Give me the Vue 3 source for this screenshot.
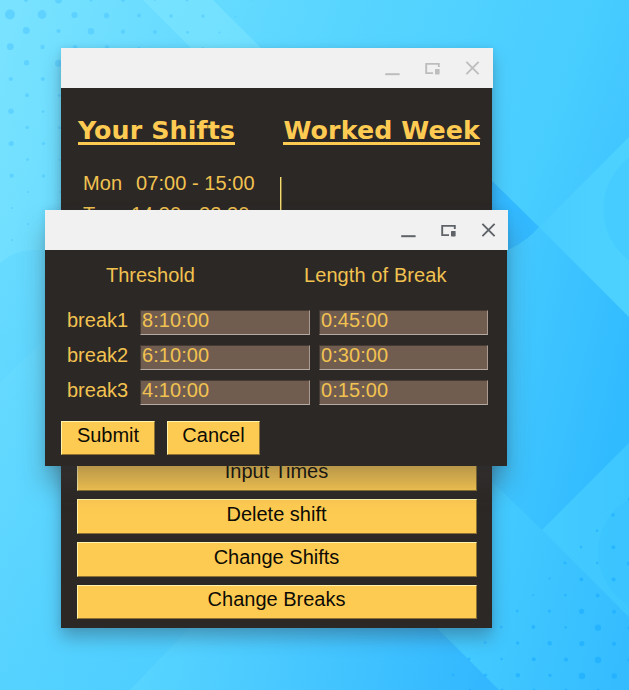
<script setup>
const shifts = [
  { day: 'Mon', time: '07:00 - 15:00' },
  { day: 'Tue', time: '14:30 - 22:30' },
]
const actions = ['Input Times', 'Delete shift', 'Change Shifts', 'Change Breaks']
const breaks = [
  { name: 'break1', threshold: '8:10:00', length: '0:45:00' },
  { name: 'break2', threshold: '6:10:00', length: '0:30:00' },
  { name: 'break3', threshold: '4:10:00', length: '0:15:00' },
]

// Halftone dots of the wallpaper: x, y, radius
const coolDots = [
  [10, 14.5, 5], [42, 14.5, 4.4], [74.5, 15, 3.1], [106.5, 15.5, 2.7], [139, 15.5, 1.9], [171, 16, 1.8], [203, 16, 1.6], [235.5, 16.5, 0.8],
  [26, 0, 2], [58.5, 0, 3.4], [91, 0, 1.5], [123, 0, 2], [155, 0, 1], [187, 0, 1.4], [251, 0, 0.8],
  [26.3, 30.5, 3.5], [58.5, 31, 2.1], [91, 31.3, 3.2], [123, 31.7, 2.1], [155, 32, 2], [187.5, 32.3, 1.4], [219.5, 32.5, 0.9],
  [10.3, 46.7, 3.4], [42.5, 47, 2.2], [75, 47.3, 2.2], [107, 47.3, 2.2], [139, 47.7, 1.2], [203, 48, 1],
  [26.6, 62.8, 2.7], [58.6, 63.2, 3.5], [10.8, 79, 2.1], [42.8, 79, 2.1], [27, 95.2, 2], [59.2, 95.5, 1.4],
  [11, 111.3, 2.7], [43, 111.6, 1.3], [27.2, 127.5, 1.7], [59.5, 127.6, 1.7], [11.3, 143.5, 2.5], [43.5, 143.6, 1.7],
  [27.5, 159.6, 1.3], [59.5, 159.7, 1], [11.7, 175.7, 2.1], [43.5, 175.9, 1.7], [28, 192, 1.1], [60, 192, 1],
  [12, 208, 1.1], [28, 224, 1.1], [12, 240, 1],
]
const deepDots = [
  [613, 515, 1.7], [629, 499, 1.2], [597, 530.8, 1.2], [581, 547, 1.3], [613.3, 547.3, 2], [565, 563, 1.4], [597.2, 563, 1.3], [629, 563.5, 2],
  [549.5, 578.6, 1], [581.4, 579.3, 1.9], [613.6, 579.5, 2], [533.2, 595, 1.1], [565.3, 595, 1.3], [597.6, 595.4, 2],
  [517.2, 611, 1.3], [549.4, 611.2, 1.4], [581.6, 611.3, 2.6], [614, 611.8, 2], [501.2, 627, 1.2], [533.3, 627, 2], [565.7, 627.3, 1.2], [598, 627.7, 3.1], [629, 628, 1.5],
  [485.2, 642.6, 1.2], [517.6, 643, 1.7], [549.7, 643.2, 2.2], [581.8, 643.5, 2.6], [614, 643.8, 2.1],
  [469.2, 658.8, 1.4], [501.5, 659, 1.3], [533.8, 659.3, 2], [566, 659.7, 2.1], [598, 660, 3.2], [629, 660, 1.5],
  [453.2, 674.8, 1.4], [485.5, 675, 1.6], [517.8, 675.3, 2.2], [550, 675.4, 1.7], [582, 676, 3.2], [614.3, 676, 2.7],
  [470, 690, 1.2], [502, 690, 1.3], [534, 690, 1.5], [566, 690, 1.5], [598, 690, 1.5],
]
</script>

<template>
  <div class="desktop">
    <svg class="wallpaper" width="629" height="690" viewBox="0 0 629 690">
      <defs>
        <linearGradient id="sky" gradientUnits="userSpaceOnUse" x1="0" y1="60" x2="640" y2="290">
          <stop offset="0" stop-color="#78e2ff" />
          <stop offset="0.45" stop-color="#58d5ff" />
          <stop offset="0.8" stop-color="#48cdff" />
          <stop offset="1" stop-color="#3bbfff" />
        </linearGradient>
        <linearGradient id="mid" gradientUnits="userSpaceOnUse" x1="505" y1="340" x2="629" y2="370">
          <stop offset="0" stop-color="#43c8ff" />
          <stop offset="1" stop-color="#31bbff" />
        </linearGradient>
        <linearGradient id="band" gradientUnits="userSpaceOnUse" x1="480" y1="600" x2="629" y2="640">
          <stop offset="0" stop-color="#43caff" />
          <stop offset="1" stop-color="#34bcff" />
        </linearGradient>
        <linearGradient id="lower" gradientUnits="userSpaceOnUse" x1="150" y1="620" x2="480" y2="690">
          <stop offset="0" stop-color="#57d4ff" />
          <stop offset="1" stop-color="#33b8ff" />
        </linearGradient>
        <linearGradient id="left" gradientUnits="userSpaceOnUse" x1="0" y1="250" x2="0" y2="370">
          <stop offset="0" stop-color="#45c8ff" stop-opacity="0.2" />
          <stop offset="1" stop-color="#45c8ff" stop-opacity="0.28" />
        </linearGradient>
        <linearGradient id="left-low" gradientUnits="userSpaceOnUse" x1="0" y1="360" x2="100" y2="660">
          <stop offset="0" stop-color="#45c8ff" stop-opacity="0.16" />
          <stop offset="1" stop-color="#45c8ff" stop-opacity="0.4" />
        </linearGradient>
        <linearGradient id="wedge" gradientUnits="userSpaceOnUse" x1="540" y1="0" x2="629" y2="0">
          <stop offset="0" stop-color="#48cdff" />
          <stop offset="1" stop-color="#4dd2ff" />
        </linearGradient>
        <linearGradient id="wedge-low" gradientUnits="userSpaceOnUse" x1="540" y1="0" x2="629" y2="0">
          <stop offset="0" stop-color="#44cbff" />
          <stop offset="1" stop-color="#3ec7ff" />
        </linearGradient>
      </defs>
      <rect width="629" height="690" fill="url(#sky)" />
      <path d="M143 0H213L261 48H191Z" fill="#85e9ff" opacity="0.45" />
      <path d="M0 263Q14 250 34 250H62V322L0 383Z" fill="url(#left)" />
      <path d="M0 383L62 322V628H190L130 690H0Z" fill="url(#left-low)" />
      <path d="M492 181L539 227L629 317V443L542 530L492 482Z" fill="url(#mid)" />
      <path d="M492 181L539 227Q525 243 507 250L492 250Z" fill="#2eb4ff" opacity="0.75" />
      <path d="M539 227L629 137V317Z" fill="url(#wedge)" />
      <circle cx="668" cy="209" r="64.5" fill="#44c9ff" opacity="0.65" />
      <path d="M437 628L492 482L542 530L629 617V690H499Z" fill="url(#band)" />
      <path d="M542 530L629 443V617Z" fill="url(#wedge-low)" />
      <circle cx="659" cy="552" r="61" fill="#38c0ff" opacity="0.45" />
      <path d="M190 628H437L499 690H130Z" fill="url(#lower)" />
      <circle v-for="(d, i) in coolDots" :key="'c' + i" :cx="d[0]" :cy="d[1]" :r="d[2]" fill="#50c8ff" opacity="0.6" />
      <circle v-for="(d, i) in deepDots" :key="'d' + i" :cx="d[0]" :cy="d[1]" :r="d[2]" fill="#18aaff" opacity="0.55" />
    </svg>

    <section class="window main-window">
      <header class="titlebar muted">
        <svg class="controls" width="96" height="18" viewBox="0 0 96 18">
          <path d="M1.2 15.2H15.6" stroke-width="2" />
          <path d="M49 14.1H42.2V4.9H54.8V8" stroke-width="1.9" />
          <rect class="solid" x="51" y="10" width="4.6" height="5.4" rx="0.6" />
          <path d="M82.4 2.9L94.6 15.1M94.6 2.9L82.4 15.1" stroke-width="1.9" />
        </svg>
      </header>
      <div class="main-body">
        <div class="headings">
          <h2>Your Shifts</h2>
          <h2>Worked Week</h2>
        </div>
        <div class="schedule">
          <div class="shift-list">
            <div v-for="s in shifts" :key="s.day" class="shift">
              <span>{{ s.day }}</span><span>{{ s.time }}</span>
            </div>
          </div>
          <div class="divider"></div>
        </div>
        <div class="actions">
          <button v-for="a in actions" :key="a" class="btn">{{ a }}</button>
        </div>
      </div>
    </section>

    <section class="window dialog">
      <header class="titlebar">
        <svg class="controls" width="96" height="18" viewBox="0 0 96 18">
          <path d="M1.2 15.2H15.6" stroke-width="2" />
          <path d="M49 14.1H42.2V4.9H54.8V8" stroke-width="1.9" />
          <rect class="solid" x="51" y="10" width="4.6" height="5.4" rx="0.6" />
          <path d="M82.4 2.9L94.6 15.1M94.6 2.9L82.4 15.1" stroke-width="1.9" />
        </svg>
      </header>
      <div class="dialog-body">
        <div class="columns"><span>Threshold</span><span class="wide">Length of Break</span></div>
        <div class="break-grid">
          <template v-for="b in breaks" :key="b.name">
            <span class="label">{{ b.name }}</span>
            <div class="field">{{ b.threshold }}</div>
            <div class="field">{{ b.length }}</div>
          </template>
        </div>
        <div class="dialog-actions">
          <button class="btn">Submit</button>
          <button class="btn cancel">Cancel</button>
        </div>
      </div>
    </section>
  </div>
</template>

<style>
body {
  margin: 0;
  overflow: hidden;
}
</style>

<style scoped>
.desktop {
  position: relative;
  width: 629px;
  height: 690px;
  overflow: hidden;
  font: 20px/23px 'Liberation Sans', Arial, sans-serif;
  color: #f2c250;
  white-space: nowrap;
}
.wallpaper {
  display: block;
}
.window {
  position: absolute;
  display: flex;
  flex-direction: column;
}
.main-window {
  left: 61px;
  top: 48px;
  width: 431px;
  height: 580px;
  box-shadow: 0 10px 16px rgba(50, 60, 75, 0.36), 0 0 6px rgba(20, 50, 80, 0.1);
}
.dialog {
  left: 45px;
  top: 210px;
  width: 462px;
  height: 256px;
  box-shadow: 0 18px 24px rgba(60, 60, 60, 0.34), 0 0 8px rgba(20, 50, 80, 0.1);
}
.titlebar {
  box-sizing: border-box;
  flex: 0 0 40px;
  width: calc(100% + 1px);
  display: flex;
  justify-content: flex-end;
  align-items: center;
  padding: 0 12px 0 0;
  background: #f1f1f1;
  color: #5f6368;
}
.titlebar.muted {
  padding-right: 13px;
  color: #bdbdbd;
}
.controls {
  fill: none;
  stroke: currentColor;
}
.solid {
  fill: currentColor;
  stroke: none;
}
.main-body,
.dialog-body {
  flex: 1;
  min-height: 0;
  display: flex;
  flex-direction: column;
  background: #2c2826;
}
.headings {
  display: flex;
  justify-content: space-between;
  padding: 27px 12px 0 17px;
}
h2 {
  margin: 0;
  height: 27px;
  font: bold 25.33px/31px 'DejaVu Sans', sans-serif;
  letter-spacing: 0.1px;
  border-bottom: 3px solid #fecb52;
  color: #fecb52;
}
.schedule {
  display: flex;
  align-items: flex-start;
  padding: 27px 0 0 22px;
}
.shift-list {
  width: 197px;
  display: flex;
  flex-direction: column;
  gap: 8px;
}
.shift {
  display: flex;
  gap: 14px;
  letter-spacing: 0.05px;
}
.divider {
  width: 1px;
  height: 180px;
  margin-top: 5px;
  background: #f5dc70;
  border-right: 1px solid #84713c;
}
.actions {
  display: flex;
  flex-direction: column;
  gap: 8px;
  margin-top: auto;
  padding: 0 15px 9px 16px;
}
.btn {
  box-sizing: border-box;
  height: 35px;
  padding: 3px 0 0;
  display: flex;
  align-items: flex-start;
  justify-content: center;
  font: inherit;
  color: #0d0b05;
  background: #fecb52;
  border: 1px solid;
  border-color: #fff3ae #8b7133 #8b7133 #fff3ae;
}
.actions .btn {
  padding-right: 1px;
}
.actions .btn:last-child {
  height: 34px;
  padding-top: 2px;
}
.columns {
  display: flex;
  gap: 109px;
  padding: 14px 0 0 61px;
}
.wide {
  letter-spacing: 0.1px;
}
.break-grid {
  display: grid;
  grid-template-columns: 73px 170px 169px;
  grid-auto-rows: 25px;
  row-gap: 10px;
  padding: 23px 0 0 22px;
}
.break-grid .field:nth-child(3n) {
  margin-left: 9px;
  margin-right: -9px;
}
.label {
  margin-top: -1px;
}
.field {
  box-sizing: border-box;
  height: 25px;
  line-height: 19px;
  padding-left: 1px;
  letter-spacing: 0.05px;
  background: #705d50;
  border: 1px solid;
  border-color: #463a35 #a99a92 #b6aaa4 #463a35;
}
.dialog-actions {
  display: flex;
  gap: 12px;
  padding: 16px 0 0 16px;
}
.dialog-actions .btn {
  width: 94px;
  height: 34px;
  padding-top: 2px;
}
.dialog-actions .cancel {
  width: 93px;
}
</style>
